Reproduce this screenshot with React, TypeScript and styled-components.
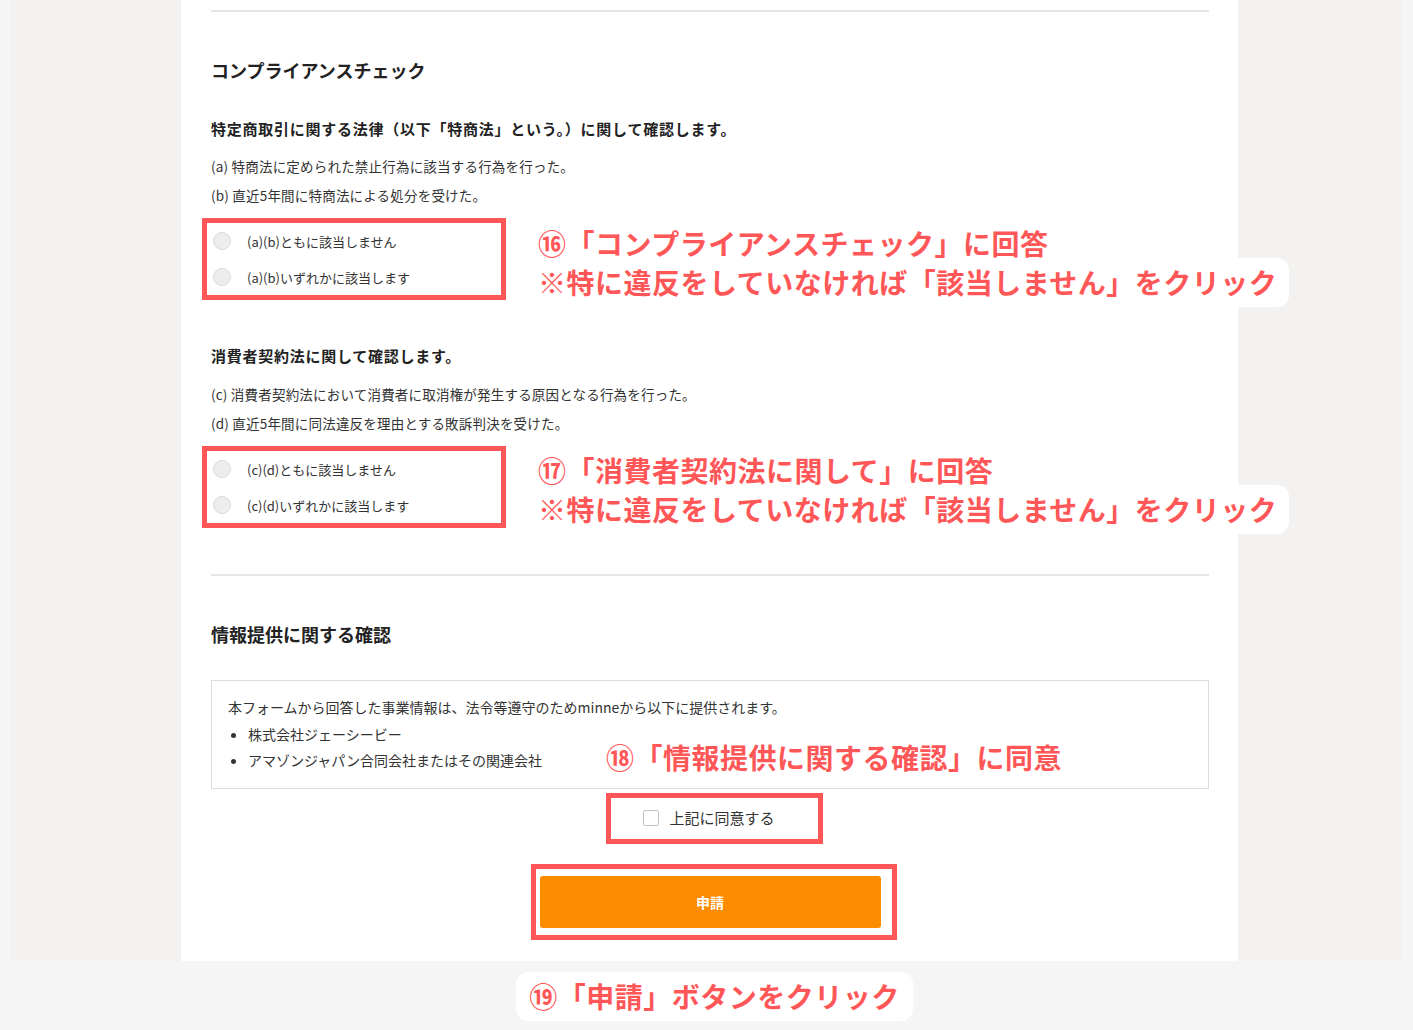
import styled, { createGlobalStyle } from "styled-components";

const GlobalStyle = createGlobalStyle`
  body {
    margin: 0;
    background: #f5f5f5;
    font-family: "Noto Sans CJK JP", "Noto Sans", sans-serif;
    color: #333333;
  }
  * {
    box-sizing: border-box;
  }
`;

const Page = styled.div`
  width: 1413px;
  min-height: 1030px;
  background: #f5f5f5;
`;

const Frame = styled.div`
  position: relative;
  margin: 0 11px 0 10px;
  height: 961px;
  background: #f3f2f0;
`;

const Column = styled.div`
  margin-left: 171px;
  width: 1057px;
  height: 961px;
  background: #ffffff;
  padding: 10px 29px 0 30px;
  display: flex;
  flex-direction: column;
`;

const Divider = styled.hr<{ gap?: number }>`
  margin: ${(p) => p.gap ?? 0}px 0 0;
  border: none;
  height: 2px;
  background: #e6e6e6;
`;

const SectionTitle = styled.h2<{ gap: number }>`
  margin: ${(p) => p.gap}px 0 0;
  font-size: 18px;
  line-height: 24px;
  font-weight: 700;
  color: #222222;
`;

const SubTitle = styled.h3<{ gap: number }>`
  margin: ${(p) => p.gap}px 0 0;
  font-size: 15px;
  line-height: 20px;
  font-weight: 700;
  letter-spacing: 0.75px;
  color: #222222;
`;

const Notes = styled.div<{ gap: number }>`
  margin-top: ${(p) => p.gap}px;
`;

const Note = styled.p`
  margin: 0;
  font-size: 13.5px;
  line-height: 29px;
  letter-spacing: 0.2px;
  color: #333333;
`;

const RadioFrame = styled.div<{ gap: number }>`
  margin: ${(p) => p.gap}px 0 0 -9px;
  width: 304px;
  height: 82px;
  border: 5px solid #ff5757;
  padding: 0 6px;
  display: flex;
  flex-direction: column;
`;

const RadioRow = styled.label`
  height: 36px;
  display: flex;
  align-items: center;
  gap: 16px;
  font-size: 13px;
  color: #333333;
`;

const Radio = styled.input`
  appearance: none;
  margin: 0;
  width: 18px;
  height: 18px;
  border-radius: 50%;
  background: #ededed;
  border: 1px solid #dadada;
`;

const InfoBox = styled.div`
  margin-top: 34px;
  border: 1px solid #dcdcdc;
  padding: 12px 16px 15px;
  font-size: 14px;
  color: #333333;
`;

const InfoText = styled.p`
  margin: 0;
  line-height: 28px;
`;

const InfoList = styled.ul`
  margin: 0;
  padding-left: 20px;
`;

const InfoItem = styled.li`
  line-height: 26px;
`;

const Centered = styled.div<{ gap: number }>`
  margin-top: ${(p) => p.gap}px;
  display: flex;
  justify-content: center;
`;

const CheckFrame = styled.label`
  margin-left: 8px;
  width: 217px;
  height: 51px;
  border: 5px solid #ff5757;
  padding: 0 0 3px 32px;
  display: flex;
  align-items: center;
  gap: 11px;
  font-size: 15px;
  color: #333333;
`;

const Checkbox = styled.input`
  appearance: none;
  margin: 2px 0 0;
  width: 16px;
  height: 16px;
  border: 1px solid #c4c4c4;
  border-radius: 2px;
  background: #ffffff;
`;

const ButtonFrame = styled.div`
  margin-left: 7px;
  border: 5px solid #ff5757;
  padding: 7px 11px 7px 4px;
`;

const SubmitButton = styled.button`
  display: block;
  width: 341px;
  height: 52px;
  border: none;
  border-radius: 3px;
  background: #fb8c00;
  color: #ffffff;
  font-family: inherit;
  font-size: 14px;
  font-weight: 700;
`;

const Annotation = styled.div<{ top: number; left: number }>`
  position: absolute;
  top: ${(p) => p.top}px;
  left: ${(p) => p.left}px;
  display: flex;
  flex-direction: column;
  align-items: flex-start;
`;

const Callout = styled.span`
  background: #ffffff;
  border-radius: 12px;
  padding: 5px 12px;
  font-size: 28px;
  line-height: 39px;
  font-weight: 700;
  letter-spacing: 0.5px;
  color: #ff5757;
  white-space: nowrap;
  & + & {
    margin-top: -10px;
  }
`;

const BottomArea = styled.div`
  padding: 11px 0 0 16px;
  display: flex;
  justify-content: center;
`;

const BottomCallout = styled(Callout)`
  padding: 5px 13px;
`;

export default function App() {
  return (
    <Page>
      <GlobalStyle />
      <Frame>
        <Column>
          <Divider />
          <SectionTitle gap={46}>コンプライアンスチェック</SectionTitle>
          <SubTitle gap={37}>
            特定商取引に関する法律（以下「特商法」という。）に関して確認します。
          </SubTitle>
          <Notes gap={13}>
            <Note>(a) 特商法に定められた禁止行為に該当する行為を行った。</Note>
            <Note>(b) 直近5年間に特商法による処分を受けた。</Note>
          </Notes>
          <RadioFrame gap={8}>
            <RadioRow>
              <Radio type="radio" name="tokusho" />
              (a)(b)ともに該当しません
            </RadioRow>
            <RadioRow>
              <Radio type="radio" name="tokusho" />
              (a)(b)いずれかに該当します
            </RadioRow>
          </RadioFrame>

          <SubTitle gap={46}>消費者契約法に関して確認します。</SubTitle>
          <Notes gap={14}>
            <Note>
              (c) 消費者契約法において消費者に取消権が発生する原因となる行為を行った。
            </Note>
            <Note>(d) 直近5年間に同法違反を理由とする敗訴判決を受けた。</Note>
          </Notes>
          <RadioFrame gap={8}>
            <RadioRow>
              <Radio type="radio" name="shohisha" />
              (c)(d)ともに該当しません
            </RadioRow>
            <RadioRow>
              <Radio type="radio" name="shohisha" />
              (c)(d)いずれかに該当します
            </RadioRow>
          </RadioFrame>

          <Divider gap={46} />
          <SectionTitle gap={46}>情報提供に関する確認</SectionTitle>
          <InfoBox>
            <InfoText>
              本フォームから回答した事業情報は、法令等遵守のためminneから以下に提供されます。
            </InfoText>
            <InfoList>
              <InfoItem>株式会社ジェーシービー</InfoItem>
              <InfoItem>アマゾンジャパン合同会社またはその関連会社</InfoItem>
            </InfoList>
          </InfoBox>
          <Centered gap={4}>
            <CheckFrame>
              <Checkbox type="checkbox" />
              上記に同意する
            </CheckFrame>
          </Centered>
          <Centered gap={20}>
            <ButtonFrame>
              <SubmitButton>申請</SubmitButton>
            </ButtonFrame>
          </Centered>
        </Column>

        <Annotation top={219} left={516}>
          <Callout>⑯「コンプライアンスチェック」に回答</Callout>
          <Callout>※特に違反をしていなければ「該当しません」をクリック</Callout>
        </Annotation>
        <Annotation top={446} left={516}>
          <Callout>⑰「消費者契約法に関して」に回答</Callout>
          <Callout>※特に違反をしていなければ「該当しません」をクリック</Callout>
        </Annotation>
        <Annotation top={733} left={584}>
          <Callout>⑱「情報提供に関する確認」に同意</Callout>
        </Annotation>
      </Frame>
      <BottomArea>
        <BottomCallout>⑲「申請」ボタンをクリック</BottomCallout>
      </BottomArea>
    </Page>
  );
}
